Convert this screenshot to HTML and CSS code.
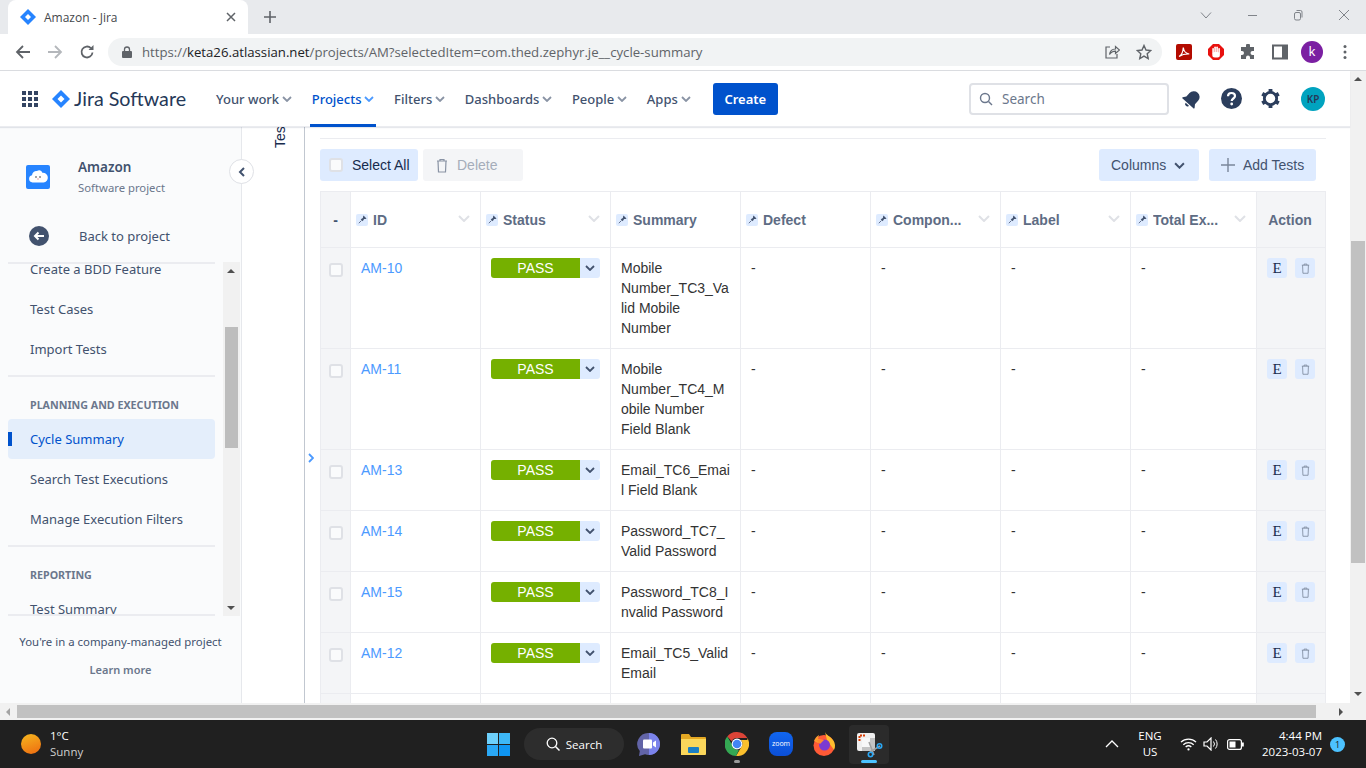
FILE: index.html
```html
<!DOCTYPE html>
<html lang="en">
<head>
    <meta charset="UTF-8">
    <meta name="viewport" content="width=device-width, initial-scale=1.0">
    <title>Amazon - Jira</title>
    <link rel="stylesheet" href="styles.css">
</head>
<body>

    <!-- Browser tab strip -->
    <div class="tabstrip">
        <div class="tab">
            <svg class="tab-logo" viewBox="0 0 16 16"><path d="M8 0l8 8-8 8-8-8z" fill="#2684ff"/><path d="M8 5l3 3-3 3-3-3z" fill="#fff"/></svg>
            <span class="tab-title">Amazon - Jira</span>
            <svg class="tab-close" viewBox="0 0 10 10"><path d="M1 1l8 8M9 1l-8 8" stroke="#5f6368" stroke-width="1.5"/></svg>
        </div>
        <svg class="tab-new" viewBox="0 0 12 12"><path d="M6 0v12M0 6h12" stroke="#5f6368" stroke-width="1.6"/></svg>
        <div class="window-controls">
            <svg viewBox="0 0 12 12"><path d="M1 3.500l5 5.500 5-5.500" fill="none" stroke="#80848a"/></svg>
            <svg viewBox="0 0 12 12"><path d="M2 6.500h9" stroke="#80848a"/></svg>
            <svg viewBox="0 0 12 12"><rect x="2.500" y="3.500" width="6" height="7.500" rx="1.500" fill="none" stroke="#80848a"/><path d="M4.500 1.500h4a1.500 1.500 0 0 1 1.500 1.500v5.500" fill="none" stroke="#80848a"/></svg>
            <svg viewBox="0 0 12 12"><path d="M1 1l10 10M11 1l-10 10" stroke="#80848a"/></svg>
        </div>
    </div>

    <!-- Browser toolbar -->
    <div class="toolbar">
        <svg class="tool-btn" viewBox="0 0 16 16"><path d="M15 8H2M8 2L2 8l6 6" fill="none" stroke="#5f6368" stroke-width="1.8"/></svg>
        <svg class="tool-btn" viewBox="0 0 16 16"><path d="M1 8h13M8 2l6 6-6 6" fill="none" stroke="#b4b7bb" stroke-width="1.800"/></svg>
        <svg class="tool-btn" viewBox="0 0 16 16"><path d="M13.500 8.500a5.500 5.500 0 1 1-1.600-4.400" fill="none" stroke="#5f6368" stroke-width="1.800"/><path d="M14.500 1v5h-5z" fill="#5f6368"/></svg>
        <div class="omnibox">
            <svg class="lock" viewBox="0 0 10 12"><path d="M2.500 5V3.500a2.500 2.500 0 0 1 5 0V5" fill="none" stroke="#5f6368" stroke-width="1.300"/><rect y="5" width="10" height="7" rx="1" fill="#5f6368"/></svg>
            <span class="url"><span class="url-dim">https://</span>keta26.atlassian.net<span class="url-dim">/projects/AM?selectedItem=com.thed.zephyr.je__cycle-summary</span></span>
            <svg class="omni-icon" viewBox="0 0 16 16"><path d="M6 3H2v11h11v-4" fill="none" stroke="#5f6368" stroke-width="1.200"/><path d="M5.500 10.500c.5-3.500 3-5.500 6-5.500V2.500L15.500 6l-4 3.500V7.200c-2.500 0-4.500 1-6 3.300z" fill="none" stroke="#5f6368" stroke-width="1.200"/></svg>
            <svg class="omni-icon" viewBox="0 0 16 16"><path d="M8 1.500l2 4.500 4.800.5-3.600 3.200 1 4.800L8 12.100l-4.200 2.400 1-4.800L1.200 6.500 6 6z" fill="none" stroke="#5f6368" stroke-width="1.400"/></svg>
        </div>
        <div class="extensions">
            <svg viewBox="0 0 16 16"><rect width="16" height="16" rx="2" fill="#b30b00"/><path d="M3 12.500c2-1 4-5 4.300-9 .4 3.500 2.500 6 6 6.500-3.500-.2-7 .5-10.300 2.500z" fill="none" stroke="#fff" stroke-width="1.200"/></svg>
            <svg viewBox="0 0 16 16"><path d="M5 0h6l5 5v6l-5 5H5l-5-5V5z" fill="#e8110f"/><g fill="#fff"><rect x="4.300" y="4" width="1.600" height="6" rx=".8"/><rect x="6.300" y="2.500" width="1.600" height="7" rx=".8"/><rect x="8.300" y="2.500" width="1.600" height="7" rx=".8"/><rect x="10.300" y="4" width="1.600" height="6" rx=".8"/><rect x="4.300" y="8" width="7.600" height="5.500" rx="2.500"/></g></svg>
            <svg viewBox="0 0 16 16"><path d="M6 1.500a2 2 0 0 1 4 0V3h4v4h-1.500a2 2 0 0 0 0 4H14v4H10v-1.500a2 2 0 0 0-4 0V15H1v-4h1a2 2 0 0 0 0-4H1V3h5z" fill="#5f6368"/></svg>
            <svg viewBox="0 0 16 16"><path d="M1 1.500h14v13H1z" fill="none" stroke="#5f6368" stroke-width="2"/><rect x="10" y="1.500" width="5" height="13" fill="#5f6368"/></svg>
            <span class="chrome-avatar">k</span>
            <svg class="kebab" viewBox="0 0 4 16"><circle cx="2" cy="2.500" r="1.500" fill="#5f6368"/><circle cx="2" cy="8" r="1.500" fill="#5f6368"/><circle cx="2" cy="13.500" r="1.500" fill="#5f6368"/></svg>
        </div>
    </div>

    <div class="viewport">
        <div class="page">

            <!-- Jira top navigation -->
            <nav class="topnav">
                <svg class="apps-grid" viewBox="0 0 16 16"><g fill="#344563"><rect width="4" height="4"/><rect x="6" width="4" height="4"/><rect x="12" width="4" height="4"/><rect y="6" width="4" height="4"/><rect x="6" y="6" width="4" height="4"/><rect x="12" y="6" width="4" height="4"/><rect y="12" width="4" height="4"/><rect x="6" y="12" width="4" height="4"/><rect x="12" y="12" width="4" height="4"/></g></svg>
                <svg class="jira-logo" viewBox="0 0 18 18"><path d="M9 0l9 9-9 9-9-9z" fill="#2684ff"/><path d="M9 5.500L12.500 9 9 12.500 5.500 9z" fill="#fff"/></svg>
                <span class="brand">Jira Software</span>
                <a class="nav-item">Your work<svg class="caret" viewBox="0 0 10 6"><path d="M1 1l4 4 4-4" fill="none" stroke="#8993a4" stroke-width="1.800"/></svg></a>
                <a class="nav-item active">Projects<svg class="caret" viewBox="0 0 10 6"><path d="M1 1l4 4 4-4" fill="none" stroke="#4c9aff" stroke-width="1.800"/></svg></a>
                <a class="nav-item">Filters<svg class="caret" viewBox="0 0 10 6"><path d="M1 1l4 4 4-4" fill="none" stroke="#8993a4" stroke-width="1.800"/></svg></a>
                <a class="nav-item">Dashboards<svg class="caret" viewBox="0 0 10 6"><path d="M1 1l4 4 4-4" fill="none" stroke="#8993a4" stroke-width="1.800"/></svg></a>
                <a class="nav-item">People<svg class="caret" viewBox="0 0 10 6"><path d="M1 1l4 4 4-4" fill="none" stroke="#8993a4" stroke-width="1.800"/></svg></a>
                <a class="nav-item">Apps<svg class="caret" viewBox="0 0 10 6"><path d="M1 1l4 4 4-4" fill="none" stroke="#8993a4" stroke-width="1.800"/></svg></a>
                <button class="create-btn">Create</button>
                <div class="nav-search">
                    <svg viewBox="0 0 14 14"><circle cx="6" cy="6" r="4.500" fill="none" stroke="#6b778c" stroke-width="1.400"/><path d="M9.500 9.500l3.500 3.500" stroke="#6b778c" stroke-width="1.400"/></svg>
                    <span>Search</span>
                </div>
                <svg class="nav-icon bell" viewBox="0 0 20 20"><g transform="rotate(42 10 10)" fill="#2c3e5d"><path d="M10 1.500a5.800 5.800 0 0 0-5.800 5.800v4.700L2 15v1h16v-1l-2.200-3V7.300A5.800 5.800 0 0 0 10 1.500z"/><path d="M7.800 17h4.400a2.200 2.200 0 0 1-4.400 0z"/></g></svg>
                <svg class="nav-icon help" viewBox="0 0 21 21"><circle cx="10.500" cy="10.500" r="10.500" fill="#2c3e5d"/><path d="M7 8.200c0-2 1.600-3.200 3.500-3.200s3.500 1.200 3.500 3c0 2.500-3.300 2.500-3.300 5" fill="none" stroke="#fff" stroke-width="2.200"/><circle cx="10.700" cy="16" r="1.400" fill="#fff"/></svg>
                <svg class="nav-icon gear" viewBox="0 0 20 20"><circle cx="10" cy="10" r="6.500" fill="none" stroke="#2c3e5d" stroke-width="3"/><g fill="#2c3e5d"><rect x="8" y="0" width="4" height="4"/><rect x="8" y="16" width="4" height="4"/><rect x="8" y="0" width="4" height="4" transform="rotate(60 10 10)"/><rect x="8" y="0" width="4" height="4" transform="rotate(120 10 10)"/><rect x="8" y="0" width="4" height="4" transform="rotate(240 10 10)"/><rect x="8" y="0" width="4" height="4" transform="rotate(300 10 10)"/></g></svg>
                <span class="user-avatar">KP</span>
            </nav>

            <div class="main">
                <!-- Project sidebar -->
                <aside class="sidebar">
                    <div class="project-head">
                        <svg class="project-logo" viewBox="0 0 24 24"><rect width="24" height="24" rx="2" fill="#2684ff"/><path d="M6.500 17.500a3.700 3.700 0 0 1-.5-7.300A4.500 4.500 0 0 1 11 6c1.800-1.500 4.800-.8 5.300 1.700a4.900 4.900 0 0 1 1.200 9.800z" fill="#fff"/><circle cx="10" cy="12" r=".8" fill="#333"/><circle cx="14" cy="12" r=".8" fill="#333"/><path d="M11.500 13.500h1v1h-1z" fill="#e5484d"/></svg>
                        <div>
                            <div class="project-name">Amazon</div>
                            <div class="project-type">Software project</div>
                        </div>
                    </div>
                    <div class="back-row">
                        <svg viewBox="0 0 20 20"><circle cx="10" cy="10" r="10" fill="#42526e"/><path d="M15 10H6M9.500 6.500L6 10l3.500 3.500" fill="none" stroke="#fff" stroke-width="2"/></svg>
                        <span>Back to project</span>
                    </div>

                    <div class="side-scroll">
                        <div class="side-list">
                            <div class="side-inner">
                                <a class="side-item">Create a BDD Feature</a>
                                <a class="side-item">Test Cases</a>
                                <a class="side-item">Import Tests</a>
                                <hr class="side-rule">
                                <div class="side-heading">PLANNING AND EXECUTION</div>
                                <a class="side-item selected">Cycle Summary</a>
                                <a class="side-item">Search Test Executions</a>
                                <a class="side-item">Manage Execution Filters</a>
                                <hr class="side-rule">
                                <div class="side-heading">REPORTING</div>
                                <a class="side-item">Test Summary</a>
                            </div>
                        </div>
                        <div class="mini-scroll">
                            <span class="arrow-up"></span>
                            <span class="mini-thumb"></span>
                            <span class="arrow-down"></span>
                        </div>
                    </div>

                    <div class="side-foot">
                        <p>You're in a company-managed project</p>
                        <p class="learn-more">Learn more</p>
                    </div>
                    <button class="collapse-btn"><svg viewBox="0 0 8 10"><path d="M6 1L2 5l4 4" fill="none" stroke="#42526e" stroke-width="2"/></svg></button>
                </aside>

                <div class="gutter"><span class="gutter-label">Test Cycles</span></div>

                <div class="expander"><svg viewBox="0 0 6 10"><path d="M1 1l4 4-4 4" fill="none" stroke="#4c9aff" stroke-width="1.800"/></svg></div>

                <!-- Cycle summary content -->
                <section class="content">
                    <div class="action-bar">
                        <button class="btn btn-select"><span class="check"></span>Select All</button>
                        <button class="btn btn-delete">
                            <svg viewBox="0 0 12 15"><path d="M1 3h10M4 3V1.500h4V3M2 3l.5 11h7L10 3" fill="none" stroke="#8993a4" stroke-width="1.200"/></svg>
                            Delete
                        </button>
                        <button class="btn btn-columns">Columns<svg viewBox="0 0 10 6"><path d="M1 1l4 4 4-4" fill="none" stroke="#42526e" stroke-width="1.800"/></svg></button>
                        <button class="btn btn-add">
                            <svg viewBox="0 0 14 14"><path d="M7 0v14M0 7h14" stroke="#7a869a" stroke-width="1.400"/></svg>
                            Add Tests
                        </button>
                    </div>

                    <table class="grid">
                        <colgroup>
                            <col class="col-check"><col class="col-std"><col class="col-std"><col class="col-std"><col class="col-std"><col class="col-std"><col class="col-std"><col class="col-total"><col class="col-action">
                        </colgroup>
                        <thead>
                            <tr>
                                <th class="cell-check">-</th>
                                <th><div class="th-in"><span class="pin"><svg viewBox="0 0 9 9"><path d="M5.500.5l3 3-1 .4-1.400.2L4.700 6.300 2.700 4.300l2.200-1.400.2-1.400z" fill="#42526e"/><path d="M3.500 5.500L.8 8.200" stroke="#42526e" stroke-width=".8"/></svg></span><span class="th-text">ID</span><svg class="sort" viewBox="0 0 12 7"><path d="M1 1l5 5 5-5" fill="none" stroke="#dfe1e6" stroke-width="2"/></svg></div></th>
                                <th><div class="th-in"><span class="pin"><svg viewBox="0 0 9 9"><path d="M5.500.5l3 3-1 .4-1.400.2L4.700 6.300 2.700 4.300l2.200-1.400.2-1.400z" fill="#42526e"/><path d="M3.500 5.500L.8 8.200" stroke="#42526e" stroke-width=".8"/></svg></span><span class="th-text">Status</span><svg class="sort" viewBox="0 0 12 7"><path d="M1 1l5 5 5-5" fill="none" stroke="#dfe1e6" stroke-width="2"/></svg></div></th>
                                <th><div class="th-in"><span class="pin"><svg viewBox="0 0 9 9"><path d="M5.500.5l3 3-1 .4-1.400.2L4.700 6.300 2.700 4.300l2.200-1.400.2-1.400z" fill="#42526e"/><path d="M3.500 5.500L.8 8.200" stroke="#42526e" stroke-width=".8"/></svg></span><span class="th-text">Summary</span></div></th>
                                <th><div class="th-in"><span class="pin"><svg viewBox="0 0 9 9"><path d="M5.500.5l3 3-1 .4-1.400.2L4.700 6.300 2.700 4.300l2.200-1.400.2-1.400z" fill="#42526e"/><path d="M3.500 5.500L.8 8.200" stroke="#42526e" stroke-width=".8"/></svg></span><span class="th-text">Defect</span></div></th>
                                <th><div class="th-in"><span class="pin"><svg viewBox="0 0 9 9"><path d="M5.500.5l3 3-1 .4-1.400.2L4.700 6.300 2.700 4.300l2.200-1.400.2-1.400z" fill="#42526e"/><path d="M3.500 5.500L.8 8.200" stroke="#42526e" stroke-width=".8"/></svg></span><span class="th-text">Compon...</span><svg class="sort" viewBox="0 0 12 7"><path d="M1 1l5 5 5-5" fill="none" stroke="#dfe1e6" stroke-width="2"/></svg></div></th>
                                <th><div class="th-in"><span class="pin"><svg viewBox="0 0 9 9"><path d="M5.500.5l3 3-1 .4-1.400.2L4.700 6.300 2.700 4.300l2.200-1.400.2-1.400z" fill="#42526e"/><path d="M3.500 5.500L.8 8.200" stroke="#42526e" stroke-width=".8"/></svg></span><span class="th-text">Label</span><svg class="sort" viewBox="0 0 12 7"><path d="M1 1l5 5 5-5" fill="none" stroke="#dfe1e6" stroke-width="2"/></svg></div></th>
                                <th><div class="th-in"><span class="pin"><svg viewBox="0 0 9 9"><path d="M5.500.5l3 3-1 .4-1.400.2L4.700 6.300 2.700 4.300l2.200-1.400.2-1.400z" fill="#42526e"/><path d="M3.500 5.500L.8 8.200" stroke="#42526e" stroke-width=".8"/></svg></span><span class="th-text">Total Ex...</span><svg class="sort" viewBox="0 0 12 7"><path d="M1 1l5 5 5-5" fill="none" stroke="#dfe1e6" stroke-width="2"/></svg></div></th>
                                <th class="cell-action th-action">Action</th>
                            </tr>
                        </thead>
                        <tbody id="rows"></tbody>
                    </table>
                </section>
            </div>
        </div>

        <!-- Page vertical scrollbar -->
        <div class="page-scroll">
            <span class="arrow-up"></span>
            <span class="page-thumb"></span>
            <span class="arrow-down"></span>
        </div>
    </div>

    <!-- Page horizontal scrollbar -->
    <div class="hscroll">
        <span class="arrow-left"></span>
        <span class="h-thumb"></span>
        <span class="arrow-right"></span>
    </div>

    <!-- Windows taskbar -->
    <footer class="taskbar">
        <div class="weather">
            <span class="sun"></span>
            <div><div>1°C</div><div class="weather-sub">Sunny</div></div>
        </div>
        <div class="task-center">
            <svg class="win-logo" viewBox="0 0 23 23"><rect width="11" height="11" fill="#6dd0fb"/><rect x="12" width="11" height="11" fill="#3db7f7"/><rect y="12" width="11" height="11" fill="#2aa8f5"/><rect x="12" y="12" width="11" height="11" fill="#0f95f2"/></svg>
            <div class="task-search">
                <svg viewBox="0 0 14 14"><circle cx="6" cy="6" r="4.800" fill="none" stroke="#fff" stroke-width="1.300"/><path d="M9.500 9.500l4 4" stroke="#fff" stroke-width="1.500"/></svg>
                Search
            </div>
            <svg class="task-icon meet" viewBox="0 0 24 24"><path d="M12 1a11 11 0 1 1-4 21.300L2 24l.8-5A11 11 0 0 1 12 1z" fill="#6264a7"/><path d="M12 1a11 11 0 0 1 0 22z" fill="#7b83eb"/><rect x="6" y="7.500" width="9" height="9" rx="1" fill="#fff"/><path d="M16 10.500l3-2v7l-3-2z" fill="#fff"/></svg>
            <svg class="task-icon folder" viewBox="0 0 25 22"><path d="M0 2a1 1 0 0 1 1-1h7l2 3h14a1 1 0 0 1 1 1v16H0z" fill="#e4a823"/><path d="M0 6h25v15a1 1 0 0 1-1 1H0z" fill="#fbd75b"/><rect x="7" y="14" width="11" height="6" rx="1" fill="#1b7fc4"/></svg>
            <div class="task-slot running">
                <svg class="task-icon" viewBox="0 0 24 24"><path d="M12 0a12 12 0 0 1 10.400 6H12a6 6 0 0 0-5.300 3.200L2.300 4.400A12 12 0 0 1 12 0z" fill="#db4437"/><path d="M22.400 6A12 12 0 0 1 11 24l5.200-8.800A6 6 0 0 0 16 8h6.400z" fill="#fbc02d"/><path d="M2.300 4.400l4.800 8.400A5.500 5.500 0 0 0 14 17.700L11 24A12 12 0 0 1 2.300 4.400z" fill="#34a853"/><circle cx="12" cy="12" r="5.400" fill="#fff"/><circle cx="12" cy="12" r="4.300" fill="#4285f4"/></svg>
            </div>
            <div class="zoom-icon">zoom</div>
            <svg class="task-icon firefox" viewBox="0 0 24 24"><circle cx="12" cy="13.500" r="10.500" fill="#ff5a36"/><path d="M13 0c1 3 5 4 8 8 2.500 3.500 2.500 7 1 10L15 8z" fill="#ffbd2e"/><path d="M2 9c1-3 3-5 5-6l-1 4 6 1-6 3z" fill="#ff9a2e"/><circle cx="12.500" cy="13" r="5.500" fill="#7b3bd0"/><path d="M4 8h8l-4 4z" fill="#ff8a2e"/></svg>
            <div class="snip-box">
                <svg viewBox="0 0 26 30"><rect width="18" height="18" rx="2" fill="#f0f0f0"/><path d="M2.500 8V2.500H8" fill="none" stroke="#d83b01" stroke-width="2" stroke-dasharray="2 1"/><path d="M5 5h13v13H5z" fill="#f8f8f8"/><path d="M13 5h5v13H5v-4h8z" fill="#c4c4c4"/><path d="M12 9l5 13M23 13l-10 6" stroke="#a0a0a0" stroke-width="1.500"/><circle cx="22.500" cy="13" r="2.200" fill="none" stroke="#2aa8f5" stroke-width="1.600"/><circle cx="13.500" cy="21.500" r="2.200" fill="none" stroke="#2aa8f5" stroke-width="1.600"/></svg>
                <span class="snip-mark"></span>
            </div>
        </div>
        <div class="tray">
            <svg class="tray-chevron" viewBox="0 0 14 8"><path d="M1 7l6-6 6 6" fill="none" stroke="#fff" stroke-width="1.300"/></svg>
            <div class="lang"><div>ENG</div><div>US</div></div>
            <svg class="tray-wifi" viewBox="0 0 18 14"><path d="M1 5a11.500 11.500 0 0 1 16 0M3.500 7.700a8 8 0 0 1 11 0M6 10.200a4.500 4.500 0 0 1 6 0" fill="none" stroke="#fff" stroke-width="1.400"/><circle cx="9" cy="12.700" r="1.200" fill="#fff"/></svg>
            <svg class="tray-sound" viewBox="0 0 16 14"><path d="M1 5h3l4-4v12l-4-4H1z" fill="none" stroke="#fff" stroke-width="1.200"/><path d="M10.500 4.500a4 4 0 0 1 0 5M12.500 2.500a7 7 0 0 1 0 9" fill="none" stroke="#fff"/></svg>
            <svg class="tray-battery" viewBox="0 0 17 11"><rect x=".6" y=".6" width="13.800" height="9.800" rx="2" fill="none" stroke="#fff" stroke-width="1.200"/><rect x="2.500" y="2.500" width="6" height="6" fill="#fff"/><rect x="15" y="3.500" width="1.800" height="4" fill="#fff"/></svg>
            <div class="clock"><div>4:44 PM</div><div>2023-03-07</div></div>
            <span class="notify">1</span>
        </div>
    </footer>

    <script>
        // Test rows shown in the cycle summary table
        const rows = [
            { id: 'AM-10', summary: 'Mobile Number_TC3_Valid Mobile Number' },
            { id: 'AM-11', summary: 'Mobile Number_TC4_Mobile Number Field Blank' },
            { id: 'AM-13', summary: 'Email_TC6_Email Field Blank' },
            { id: 'AM-14', summary: 'Password_TC7_Valid Password' },
            { id: 'AM-15', summary: 'Password_TC8_Invalid Password' },
            { id: 'AM-12', summary: 'Email_TC5_Valid Email' },
            { id: '', summary: '' }
        ];

        const caret = '<svg viewBox="0 0 10 6"><path d="M1 1l4 4 4-4" fill="none" stroke="#42526e" stroke-width="1.800"/></svg>';
        const bin = '<svg viewBox="0 0 12 15"><path d="M1 3h10M4 3V1.500h4V3M2 3l.5 11h7L10 3" fill="none" stroke="#7a869a" stroke-width="1.100"/></svg>';

        document.getElementById('rows').innerHTML = rows.map(function(row) {
            if (!row.id) {
                return '<tr><td class="cell-check"></td><td></td><td></td><td></td><td></td><td></td><td></td><td></td><td class="cell-action"></td></tr>';
            }
            return `<tr>
                <td class="cell-check"><span class="check"></span></td>
                <td><a class="issue-link">${row.id}</a></td>
                <td><div class="status"><span class="status-name">PASS</span><span class="status-drop">${caret}</span></div></td>
                <td class="summary">${row.summary}</td>
                <td>-</td><td>-</td><td>-</td><td>-</td>
                <td class="cell-action"><div class="row-actions"><span class="act-btn act-e">E</span><span class="act-btn">${bin}</span></div></td>
            </tr>`;
        }).join('');
    </script>

</body>
</html>
```

FILE: styles.css
```css
/* Page frame */
* {
    box-sizing: border-box;
}
body {
    width: 1366px;
    height: 768px;
    margin: 0;
    overflow: hidden;
    display: flex;
    flex-direction: column;
    font-family: "Noto Sans", sans-serif;
    background-color: #fff;
}
svg {
    display: block;
    flex: none;
}
p {
    margin: 0;
}

/* Tab strip */
.tabstrip {
    height: 34px;
    flex: none;
    display: flex;
    align-items: center;
    background-color: #e8eaed;
    padding-left: 8px;
}
.tab {
    width: 240px;
    height: 34px;
    margin-top: 0;
    padding: 0 12px;
    display: flex;
    align-items: center;
    background-color: #fff;
    border-radius: 8px 8px 0 0;
}
.tab-logo {
    width: 16px;
    height: 16px;
}
.tab-title {
    flex: 1;
    margin-left: 8px;
    font-family: "Open Sans", sans-serif;
    font-size: 12px;
    color: #45484c;
}
.tab-close {
    width: 10px;
    height: 10px;
}
.tab-new {
    width: 12px;
    height: 12px;
    margin-left: 16px;
}
.window-controls {
    margin-left: auto;
    display: flex;
    gap: 34px;
    padding-right: 16px;
    padding-bottom: 4px;
}
.window-controls svg {
    width: 12px;
    height: 12px;
}

/* Browser toolbar */
.toolbar {
    height: 37px;
    flex: none;
    display: flex;
    align-items: center;
    padding: 0 0 1px 15px;
    background-color: #fff;
    border-bottom: 1px solid #dadce0;
}
.tool-btn {
    width: 16px;
    height: 16px;
    margin-right: 16px;
}
.omnibox {
    width: 1054px;
    height: 28px;
    margin-left: -3px;
    display: flex;
    align-items: center;
    padding: 0 10px 0 14px;
    background-color: #f1f3f4;
    border-radius: 14px;
}
.lock {
    width: 10px;
    height: 12px;
    margin-right: 10px;
}
.url {
    flex: 1;
    font-family: "Open Sans", sans-serif;
    font-size: 13.200px;
    color: #202124;
    white-space: nowrap;
}
.url-dim {
    color: #5f6368;
}
.omni-icon {
    width: 16px;
    height: 16px;
    margin-left: 16px;
}
.extensions {
    display: flex;
    align-items: center;
    gap: 16px;
    margin-left: 14px;
}
.extensions svg {
    width: 16px;
    height: 16px;
}
.extensions .kebab {
    width: 4px;
    margin-left: 4px;
}
.chrome-avatar {
    width: 22px;
    height: 22px;
    margin-left: -3px;
    border-radius: 50%;
    background-color: #7b1fa2;
    color: #fff;
    font-size: 13px;
    text-align: center;
    line-height: 21px;
}

/* Viewport: page plus its scrollbars */
.viewport {
    height: 632px;
    flex: none;
    display: flex;
}
.page {
    width: 1350px;
    display: flex;
    flex-direction: column;
}
.page-scroll {
    width: 16px;
    position: relative;
    background-color: #f1f1f1;
}
.page-scroll .arrow-up {
    top: 6px;
    left: 4px;
}
.page-scroll .arrow-down {
    bottom: 7px;
    left: 4px;
}
.page-thumb {
    position: absolute;
    top: 170px;
    left: 1px;
    width: 14px;
    height: 322px;
    background-color: #c1c1c1;
}
.arrow-up, .arrow-down, .arrow-left, .arrow-right {
    position: absolute;
    width: 0;
    height: 0;
    border: 4px solid transparent;
}
.arrow-up {
    border-bottom-color: #505050;
    border-top-width: 0;
}
.arrow-down {
    border-top-color: #505050;
    border-bottom-width: 0;
}
.arrow-left {
    border-right-color: #a3a3a3;
    border-left-width: 0;
}
.arrow-right {
    border-left-color: #505050;
    border-right-width: 0;
}

/* Jira top nav */
.topnav {
    height: 56px;
    flex: none;
    display: flex;
    align-items: center;
    padding-left: 22px;
    background-color: #fff;
    border-bottom: 1px solid #ebecf0;
    box-shadow: 0 1px 1px rgba(9, 30, 66, 0.1);
    position: relative;
    z-index: 2;
}
.apps-grid {
    width: 16px;
    height: 16px;
}
.jira-logo {
    width: 18px;
    height: 18px;
    margin-left: 14px;
}
.brand {
    width: 120px;
    margin-left: 4px;
    font-family: "Lato", sans-serif;
    font-size: 19.700px;
    color: #253858;
    white-space: nowrap;
}
.nav-item {
    height: 56px;
    display: flex;
    align-items: center;
    gap: 3px;
    margin-left: 15.600px;
    padding: 0 2px;
    font-size: 13px;
    font-weight: 500;
    color: #42526e;
    white-space: nowrap;
}
.brand + .nav-item {
    margin-left: 20px;
}
.caret {
    width: 10px;
    height: 6px;
    margin-top: 1px;
}
.nav-item.active {
    color: #0052cc;
    box-shadow: inset 0 -3px 0 #0052cc;
}
.create-btn {
    width: 65px;
    height: 32px;
    margin-left: 20px;
    border: 0;
    border-radius: 3px;
    background-color: #0052cc;
    color: #fff;
    font-family: inherit;
    font-size: 13px;
    font-weight: 600;
}
.nav-search {
    width: 200px;
    height: 32px;
    margin-left: auto;
    margin-right: 13px;
    display: flex;
    align-items: center;
    gap: 9px;
    padding-left: 8px;
    border: 2px solid #dfe1e6;
    border-radius: 4px;
    font-size: 13.500px;
    color: #6b778c;
}
.nav-search svg {
    width: 14px;
    height: 14px;
}
.nav-icon.bell {
    width: 20px;
    height: 20px;
}
.nav-icon.help {
    width: 21px;
    height: 21px;
    margin-left: 19px;
}
.nav-icon.gear {
    width: 19px;
    height: 19px;
    margin-left: 19px;
}
.user-avatar {
    width: 24px;
    height: 24px;
    margin: 0 25px 0 21px;
    border-radius: 50%;
    background-color: #00a3bf;
    color: #253858;
    font-size: 10px;
    font-weight: 600;
    text-align: center;
    line-height: 24px;
}

/* Main area */
.main {
    flex: 1;
    min-height: 0;
    display: flex;
    overflow: hidden;
}

/* Sidebar */
.sidebar {
    width: 242px;
    flex: none;
    position: relative;
    background-color: #fafbfc;
    border-right: 1px solid #e6e8ec;
    color: #42526e;
}
.project-head {
    height: 80px;
    display: flex;
    align-items: center;
    padding: 20px 0 0 26px;
}
.project-logo {
    width: 24px;
    height: 24px;
    margin-right: 28px;
}
.project-name {
    font-size: 13.500px;
    font-weight: 600;
    line-height: 20px;
}
.project-type {
    margin-top: 1px;
    font-size: 11.300px;
    color: #6b778c;
    line-height: 20px;
}
.back-row {
    height: 55px;
    display: flex;
    align-items: center;
    padding: 3px 0 0 29px;
    font-size: 13px;
}
.back-row svg {
    width: 20px;
    height: 20px;
    margin-right: 30px;
}
.side-scroll {
    height: 354px;
    display: flex;
    padding-left: 8px;
}
.side-list {
    width: 207px;
    height: 354px;
    overflow: hidden;
    border-top: 2px solid #ebecf0;
    border-bottom: 2px solid #ebecf0;
}
.side-inner {
    margin-top: -15px;
}
.side-item {
    display: flex;
    align-items: center;
    height: 40px;
    padding-left: 22px;
    font-size: 13px;
    color: #42526e;
    white-space: nowrap;
    position: relative;
}
.side-item.selected {
    color: #0052cc;
    background-color: #e4eefb;
    border-radius: 4px;
}
.side-item.selected::before {
    content: "";
    position: absolute;
    left: 0;
    top: 13px;
    width: 4px;
    height: 14px;
    background-color: #0052cc;
}
.side-rule {
    height: 2px;
    margin: 6px 0 0;
    border: 0;
    background-color: #ebecf0;
}
.side-heading {
    height: 42px;
    padding: 20px 0 0 22px;
    font-size: 10.700px;
    font-weight: 700;
    color: #6b778c;
    white-space: nowrap;
    line-height: 16px;
}
.mini-scroll {
    width: 17px;
    height: 354px;
    margin-left: 8px;
    position: relative;
    background-color: #f1f1f1;
}
.mini-scroll .arrow-up {
    top: 7px;
    left: 4px;
}
.mini-scroll .arrow-down {
    bottom: 6px;
    left: 4px;
}
.mini-thumb {
    position: absolute;
    left: 2px;
    top: 65px;
    width: 13px;
    height: 121px;
    background-color: #bdbdbd;
}
.side-foot {
    padding-top: 16px;
    text-align: center;
    font-size: 11.400px;
    line-height: 20px;
}
.learn-more {
    margin-top: 8px;
    font-size: 11px;
    font-weight: 600;
    color: #6b778c;
}
.collapse-btn {
    position: absolute;
    top: 32px;
    right: -13px;
    width: 25px;
    height: 25px;
    padding: 0;
    display: flex;
    align-items: center;
    justify-content: center;
    border: 1px solid #dfe1e6;
    border-radius: 50%;
    background-color: #fff;
}
.collapse-btn svg {
    width: 8px;
    height: 10px;
}

/* Narrow column next to the sidebar */
.gutter {
    width: 63px;
    flex: none;
    border-right: 1px solid #c1c7d0;
    padding-left: 30px;
}
.gutter-label {
    display: block;
    height: 21px;
    overflow: hidden;
    writing-mode: vertical-rl;
    transform: rotate(180deg);
    font-family: "Liberation Sans", sans-serif;
    font-size: 14px;
    color: #172b4d;
    white-space: nowrap;
}
.expander {
    width: 15px;
    flex: none;
    padding: 326px 0 0 3px;
}
.expander svg {
    width: 6px;
    height: 10px;
}

/* Cycle summary content */
.content {
    width: 1006px;
    flex: none;
    padding-top: 11px;
    font-family: "Liberation Sans", sans-serif;
}
.action-bar {
    height: 53px;
    display: flex;
    align-items: flex-start;
    padding-top: 10px;
    border-top: 1px solid #ebecf0;
}
.btn {
    height: 32px;
    display: flex;
    align-items: center;
    border: 0;
    border-radius: 3px;
    background-color: #deebff;
    color: #42526e;
    font-family: inherit;
    font-size: 14px;
    padding: 0;
}
.btn-select {
    width: 98px;
    color: #172b4d;
    padding-left: 9px;
    gap: 9px;
}
.btn-delete {
    width: 100px;
    margin-left: 5px;
    color: #a5adba;
    background-color: #f4f5f7;
    padding-left: 13px;
    gap: 9px;
}
.btn-delete svg {
    width: 12px;
    height: 15px;
}
.btn-columns {
    width: 100px;
    margin-left: auto;
    padding-left: 12px;
    gap: 8px;
}
.btn-columns svg {
    width: 11px;
    height: 7px;
}
.btn-add {
    width: 107px;
    margin: 0 10px;
    padding-left: 12px;
    gap: 8px;
}
.btn-add svg {
    width: 14px;
    height: 14px;
}
.check {
    display: block;
    width: 14px;
    height: 14px;
    border: 2px solid #dfe1e6;
    border-radius: 3px;
    background-color: #fafbfc;
}

/* Results table */
.grid {
    width: 1005px;
    table-layout: fixed;
    border-collapse: collapse;
    font-size: 14px;
    color: #333;
}
.col-check {
    width: 30px;
}
.col-std {
    width: 130px;
}
.col-total {
    width: 126px;
}
.col-action {
    width: 69px;
}
.grid th, .grid td {
    border: 1px solid #ebecf0;
    vertical-align: top;
    text-align: left;
    padding: 10px;
    line-height: 20px;
    overflow-wrap: anywhere;
}
.grid th {
    height: 56px;
    padding: 0 5px;
    vertical-align: middle;
    color: #5e6c84;
    font-weight: 700;
}
.th-in {
    display: flex;
    align-items: center;
    white-space: nowrap;
}
.pin {
    width: 12px;
    height: 12px;
    margin-right: 5px;
    display: flex;
    align-items: center;
    justify-content: center;
    background-color: #deebff;
    border-radius: 2px;
}
.pin svg {
    width: 9px;
    height: 9px;
}
.th-text {
    flex: 1;
    overflow: hidden;
}
.sort {
    width: 12px;
    height: 7px;
    margin: -2px 5px 0 0;
}
.grid .cell-check {
    background-color: #f4f5f7;
    text-align: center;
    padding-left: 0;
    padding-right: 0;
    color: #42526e;
}
.grid td.cell-check {
    padding-top: 15px;
}
.cell-check .check {
    margin: 0 auto;
}
.grid .cell-action {
    background-color: #f4f5f7;
}
.grid .th-action {
    text-align: center;
    padding: 0 7px 0 5px;
}
.issue-link {
    color: #4c9aff;
}
.status {
    width: 109px;
    height: 20px;
    display: flex;
}
.status-name {
    width: 89px;
    border-radius: 3px 0 0 3px;
    background-color: #75b000;
    color: #fff;
    text-align: center;
}
.status-drop {
    width: 20px;
    display: flex;
    align-items: center;
    justify-content: center;
    background-color: #deebff;
    border-radius: 0 3px 3px 0;
}
.status-drop svg {
    width: 10px;
    height: 6px;
}
.row-actions {
    display: flex;
    gap: 8px;
}
.act-btn {
    width: 20px;
    height: 20px;
    display: flex;
    align-items: center;
    justify-content: center;
    background-color: #deebff;
    border-radius: 3px;
}
.act-btn svg {
    width: 9px;
    height: 11px;
}
.act-e {
    font-family: "Liberation Serif", serif;
    font-size: 15px;
    color: #172b4d;
}

/* Page horizontal scrollbar */
.hscroll {
    height: 17px;
    flex: none;
    position: relative;
    background-color: #f1f1f1;
}
.h-thumb {
    position: absolute;
    left: 17px;
    top: 2px;
    width: 1299px;
    height: 13px;
    background-color: #c1c1c1;
}
.arrow-left {
    left: 6px;
    top: 5px;
}
.arrow-right {
    left: 1339px;
    top: 5px;
}

/* Taskbar */
.taskbar {
    height: 48px;
    flex: none;
    display: flex;
    align-items: center;
    background-color: #202020;
    color: #fff;
    font-family: "Open Sans", sans-serif;
    font-size: 11.500px;
}
.weather {
    width: 487px;
    display: flex;
    align-items: center;
    gap: 9px;
    padding-left: 21px;
    line-height: 16px;
}
.sun {
    width: 20px;
    height: 20px;
    border-radius: 50%;
    background: linear-gradient(160deg, #f5b81f, #ee6a10);
}
.weather-sub {
    color: #cfcfcf;
}
.task-center {
    display: flex;
    align-items: center;
}
.win-logo {
    width: 23px;
    height: 23px;
}
.task-search {
    width: 100px;
    height: 32px;
    margin-left: 14px;
    display: flex;
    align-items: center;
    justify-content: center;
    gap: 6px;
    border-radius: 16px;
    background-color: #2d2d2d;
}
.task-search svg {
    width: 14px;
    height: 14px;
}
.task-icon {
    width: 24px;
    height: 24px;
}
.meet {
    margin-left: 13px;
}
.folder {
    width: 25px;
    height: 22px;
    margin-left: 20px;
}
.task-slot {
    margin-left: 19px;
    position: relative;
}
.running::after {
    content: "";
    position: absolute;
    left: 9px;
    bottom: -7px;
    width: 6px;
    height: 3px;
    border-radius: 2px;
    background-color: #9a9a9a;
}
.zoom-icon {
    width: 24px;
    height: 24px;
    margin-left: 20px;
    border-radius: 8px;
    background: linear-gradient(#1166f0, #0b4fd6);
    font-size: 7px;
    line-height: 24px;
    text-align: center;
}
.firefox {
    margin-left: 19px;
}
.snip-box {
    width: 40px;
    height: 39px;
    margin-left: 13px;
    padding: 8px 0 0 8px;
    position: relative;
    border-radius: 4px;
    background-color: #2b2b2b;
}
.snip-box svg {
    width: 26px;
    height: 30px;
}
.snip-mark {
    position: absolute;
    left: 12px;
    bottom: 1px;
    width: 16px;
    height: 3px;
    border-radius: 2px;
    background-color: #4cc2ff;
}
.tray {
    margin-left: auto;
    display: flex;
    align-items: center;
    padding-right: 21px;
}
.tray-chevron {
    width: 14px;
    height: 8px;
}
.lang {
    width: 24px;
    margin-left: 19px;
    text-align: center;
    line-height: 16px;
}
.tray-wifi {
    width: 17px;
    height: 14px;
    margin-left: 18px;
}
.tray-sound {
    width: 16px;
    height: 14px;
    margin-left: 6px;
}
.tray-battery {
    width: 17px;
    height: 11px;
    margin-left: 8px;
}
.clock {
    width: 78px;
    text-align: right;
    line-height: 16px;
}
.notify {
    width: 15px;
    height: 15px;
    margin-left: 8px;
    border-radius: 50%;
    background-color: #4cc2ff;
    color: #202020;
    font-size: 9px;
    line-height: 15px;
    text-align: center;
}
```
